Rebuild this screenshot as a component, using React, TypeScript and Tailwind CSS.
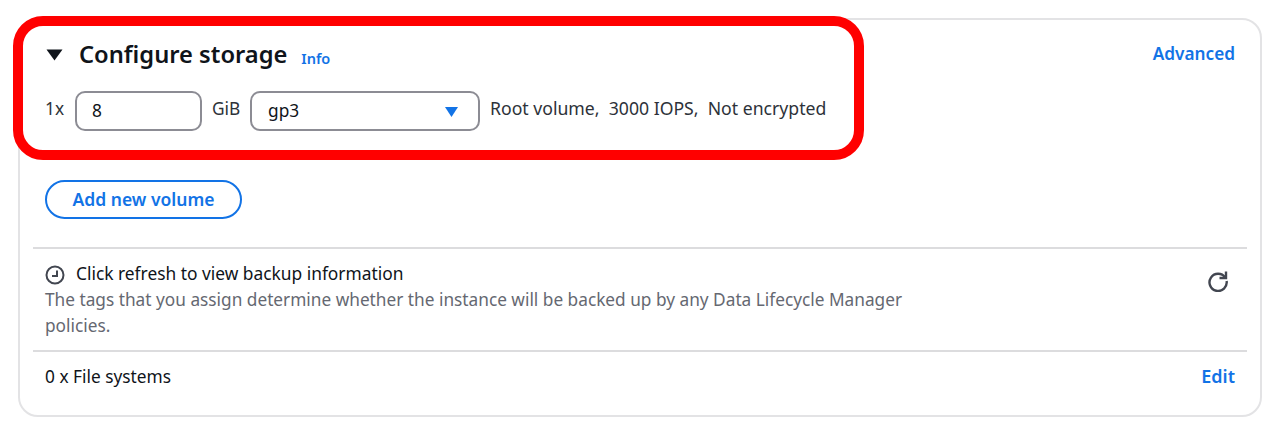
import React from "react";

const font = "font-['Noto_Sans',sans-serif]";

export default function App() {
  return (
    <div className={`relative h-[424px] w-[1276px] overflow-hidden bg-white px-[18px] pt-[18px] ${font}`}>
      <div className="h-[399px] w-[1244px] rounded-[20px] border-2 border-[#e3e3e5] px-[13px]">
        <div className="px-[12px]">
          <div className="flex h-[71px] items-start justify-between pt-[19px]">
            <div className="flex items-center">
              <svg className="ml-[1px] mt-[1px] h-[12px] w-[17px]" viewBox="0 0 17 12">
                <path d="M0.5 0.5h16L8.5 11.5z" fill="#0f141a" />
              </svg>
              <h2 className="ml-[16px] text-[23.7px] leading-[30px] font-semibold text-[#0f141a]">Configure storage</h2>
              <a className="ml-[14px] mt-[7px] text-[14.5px] leading-[20px] font-semibold text-[#1273e6]">Info</a>
            </div>
            <a className="mt-[3px] text-[17.2px] leading-[24px] font-semibold text-[#1273e6]">Advanced</a>
          </div>

          <div className="flex h-[40px] items-center text-[17.3px] text-[#2d3239]">
            <span className="mb-[5px] w-[30px]">1x</span>
            <div className="flex h-[40px] w-[127px] items-center rounded-[10px] border-2 border-[#8c8c94] pl-[15px] text-[#0f141a]">8</div>
            <span className="mb-[5px] ml-[10px] w-[38px]">GiB</span>
            <div className="flex h-[40px] w-[230px] items-center justify-between rounded-[10px] border-2 border-[#8c8c94] pl-[16px] pr-[20px] text-[#0f141a]">
              <span>gp3</span>
              <svg className="mt-[2px] h-[10px] w-[13px]" viewBox="0 0 13 10">
                <path d="M0 0h13L6.5 10z" fill="#1273e6" />
              </svg>
            </div>
            <span className="mb-[5px] ml-[10px] whitespace-pre text-[17.65px]">Root volume,  3000 IOPS,  Not encrypted</span>
          </div>

          <button className="mt-[49px] h-[39px] w-[197px] rounded-full border-2 border-[#1273e6] text-[17.5px] font-semibold text-[#1273e6]">
            Add new volume
          </button>
        </div>

        <div className="mt-[28px] border-t-2 border-[#dcdcde] px-[12px]">
          <div className="flex h-[101px] justify-between pt-[12px]">
            <div className="w-[880px]">
              <div className="flex items-center text-[17.35px] leading-[25px] text-[#0f141a]">
                <svg className="mr-[11px] mt-[2px] h-[20px] w-[20px]" viewBox="0 0 20 20" fill="none" stroke="#424650" strokeWidth="2">
                  <circle cx="10" cy="10" r="8.5" />
                  <path d="M12 5.5V11H7" />
                </svg>
                Click refresh to view backup information
              </div>
              <p className="mt-[1px] text-[17.25px] leading-[25.5px] text-[#656871]">
                The tags that you assign determine whether the instance will be backed up by any Data Lifecycle Manager policies.
              </p>
            </div>
            <svg className="mr-[6px] mt-[9px] h-[22px] w-[22px]" viewBox="0 0 22 22" fill="none" stroke="#424650" strokeWidth="2.4">
              <path d="M18.2 7.5A8.6 8.6 0 1 0 19.6 11" />
              <path d="M19 1.5V8h-6.5" />
            </svg>
          </div>
        </div>

        <div className="flex items-start justify-between border-t-2 border-[#dcdcde] px-[12px] pt-[12px] text-[17.3px] leading-[25px]">
          <span className="text-[#0f141a]">0 x File systems</span>
          <a className="text-[18px] font-semibold text-[#1273e6]">Edit</a>
        </div>
      </div>

      <div className="absolute left-[13px] top-[16px] h-[144px] w-[851px] rounded-[30px] border-[10px] border-[#ff0000]" />
    </div>
  );
}
